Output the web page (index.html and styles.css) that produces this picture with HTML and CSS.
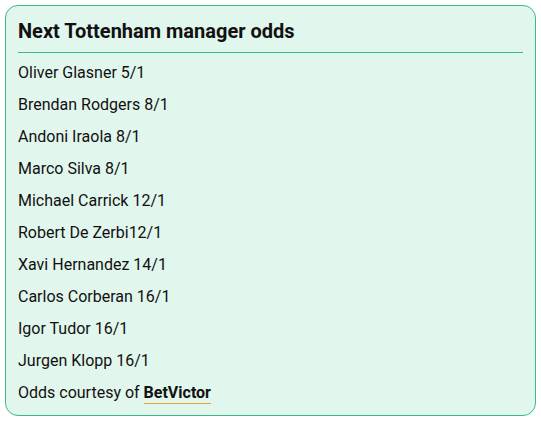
FILE: index.html
```html
<!DOCTYPE html>
<html>
<head>
<meta charset="utf-8">
<link rel="stylesheet" href="styles.css">
</head>
<body>
<div class="box">
  <h2 class="title">Next Tottenham manager odds</h2>
  <ul class="list">
    <li>Oliver Glasner 5/1</li>
    <li>Brendan Rodgers 8/1</li>
    <li>Andoni Iraola 8/1</li>
    <li>Marco Silva 8/1</li>
    <li>Michael Carrick 12/1</li>
    <li>Robert De Zerbi12/1</li>
    <li>Xavi Hernandez 14/1</li>
    <li>Carlos Corberan 16/1</li>
    <li>Igor Tudor 16/1</li>
    <li>Jurgen Klopp 16/1</li>
    <li>Odds courtesy of <a class="brand" href="#">BetVictor</a></li>
  </ul>
</div>
</body>
</html>
```
FILE: styles.css
```css
html, body {
  margin: 0;
  padding: 0;
  background: #ffffff;
}
body {
  padding: 5px 6px 6px 5px;
  font-family: Roboto, "Noto Sans", sans-serif;
  color: #111;
}
.box {
  box-sizing: border-box;
  width: 531px;
  height: 411px;
  background: #e1f6ec;
  border: 1px solid #3cba85;
  border-radius: 13px;
  padding: 0 12px 0 12px;
}
.title {
  margin: 0;
  padding: 14px 0 10px;
  font-size: 20px;
  font-weight: 700;
  line-height: 22px;
  color: #111;
  border-bottom: 1px solid #3cba85;
}
.list {
  list-style: none;
  margin: 0;
  padding: 0;
}
.list li {
  font-size: 16px;
  line-height: 20px;
  padding: 10px 0 2px;
}
.brand {
  color: #111;
  font-weight: 700;
  text-decoration: none;
  border-bottom: 1px solid #e8a33a;
  padding-bottom: 1px;
}
```
